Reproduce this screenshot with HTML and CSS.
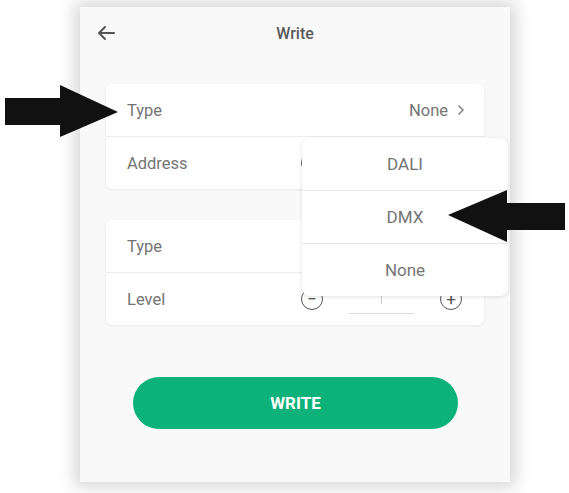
FILE: index.html
```html
<!DOCTYPE html>
<html lang="en">
<head>
    <meta charset="UTF-8">
    <meta name="viewport" content="width=device-width, initial-scale=1.0">
    <title>Write</title>
    <link rel="stylesheet" href="styles.css">
</head>
<body>
    <div class="stage">
        <div class="phone">
            <div class="header">
                <svg class="back" width="20" height="16" viewBox="0 0 20 16">
                    <path d="M18 8H3M9 2L3 8l6 6" fill="none" stroke="#555" stroke-width="2" stroke-linecap="round" stroke-linejoin="round"/>
                </svg>
                <h1>Write</h1>
            </div>

            <div class="card">
                <div class="row">
                    <span class="label">Type</span>
                    <span class="value">None
                        <svg class="chev" width="8" height="12" viewBox="0 0 8 12"><path d="M1.5 1.5L6 6l-4.5 4.5" fill="none" stroke="#777" stroke-width="1.4"/></svg>
                    </span>
                </div>
                <div class="row">
                    <span class="label">Address</span>
                    <div class="stepper">
                        <span class="round">&minus;</span>
                        <span class="field"><span class="caret"></span></span>
                        <span class="round">+</span>
                    </div>
                </div>
            </div>

            <div class="card second">
                <div class="row">
                    <span class="label">Type</span>
                    <span class="value">None
                        <svg class="chev" width="8" height="12" viewBox="0 0 8 12"><path d="M1.5 1.5L6 6l-4.5 4.5" fill="none" stroke="#777" stroke-width="1.4"/></svg>
                    </span>
                </div>
                <div class="row">
                    <span class="label">Level</span>
                    <div class="stepper">
                        <span class="round">&minus;</span>
                        <span class="field"><span class="caret"></span></span>
                        <span class="round">+</span>
                    </div>
                </div>
            </div>

            <button class="write-btn">WRITE</button>

            <!-- popup list opened from the Type row -->
            <ul class="dropdown">
                <li>DALI</li>
                <li>DMX</li>
                <li>None</li>
            </ul>
        </div>

        <!-- annotation arrows -->
        <svg class="pointer pointer-left" width="115" height="54" viewBox="0 0 115 54">
            <path d="M0 13H55V0L113 27L55 52V40H0Z" fill="#111"/>
        </svg>
        <svg class="pointer pointer-right" width="117" height="54" viewBox="0 0 117 54">
            <path d="M117 13H59V0L0 25L59 52V40H117Z" fill="#111"/>
        </svg>
    </div>
</body>
</html>
```

FILE: styles.css
```css
body {
    margin: 0;
    padding: 0;
    background-color: #ffffff;
    font-family: Roboto, 'Liberation Sans', sans-serif;
}

.stage {
    position: relative;
    width: 569px;
    height: 493px;
    padding: 7px 0 0 80px;
    box-sizing: border-box;
    overflow: hidden;
}

.phone {
    position: relative;
    width: 430px;
    height: 475px;
    background-color: #f9f9f9;
    box-shadow: 0 0 16px 5px rgba(0, 0, 0, 0.17);
    padding: 0 26px;
    box-sizing: border-box;
    display: flex;
    flex-direction: column;
}

.header {
    position: relative;
    height: 52px;
    display: flex;
    align-items: center;
    justify-content: center;
    margin-bottom: 25px;
}

.back {
    position: absolute;
    left: -10px;
    top: 18px;
}

.header h1 {
    margin: 0;
    font-size: 16px;
    font-weight: 500;
    color: #5a5a5a;
}

.card {
    background-color: #fff;
    border-radius: 6px;
    box-shadow: 0 1px 3px rgba(0, 0, 0, 0.08);
}

.card.second {
    margin-top: 31px;
}

.row {
    height: 52px;
    display: flex;
    align-items: center;
    justify-content: space-between;
    padding: 0 19px 0 21px;
    border-bottom: 1px solid #ededed;
    font-size: 16.5px;
    color: #747474;
}

.row:last-child {
    border-bottom: none;
}

.value {
    display: flex;
    align-items: center;
}

.value .chev {
    margin-left: 9px;
}

.stepper {
    display: flex;
    align-items: center;
    margin-right: 3px;
}

.round {
    width: 20px;
    height: 20px;
    border: 1.5px solid #555;
    border-radius: 50%;
    display: flex;
    align-items: center;
    justify-content: center;
    font-size: 17px;
    line-height: 1;
    color: #555;
}

.field {
    width: 65px;
    height: 22px;
    margin: 6px 26px 0 26px;
    border-bottom: 1.5px solid #ddd;
    display: flex;
    justify-content: center;
}

.caret {
    width: 1px;
    height: 11px;
    margin-top: 2px;
    background-color: #ccc;
}

.write-btn {
    margin: 52px 26px 0 27px;
    height: 52px;
    border: none;
    border-radius: 26px;
    background-color: #0db27a;
    color: #fff;
    font-family: Roboto, 'Liberation Sans', sans-serif;
    font-size: 17px;
    font-weight: 700;
}

.dropdown {
    position: absolute;
    left: 222px;
    top: 131px;
    width: 206px;
    margin: 0;
    padding: 0;
    list-style: none;
    background-color: #fff;
    border-radius: 8px;
    box-shadow: 0 1px 4px rgba(0, 0, 0, 0.12);
}

.dropdown li {
    height: 52px;
    display: flex;
    align-items: center;
    justify-content: center;
    border-bottom: 1px solid #e8e8e8;
    font-size: 17px;
    color: #747474;
}

.dropdown li:last-child {
    border-bottom: none;
}

.pointer {
    position: absolute;
}

.pointer-left {
    left: 5px;
    top: 85px;
}

.pointer-right {
    left: 448px;
    top: 190px;
}
```
